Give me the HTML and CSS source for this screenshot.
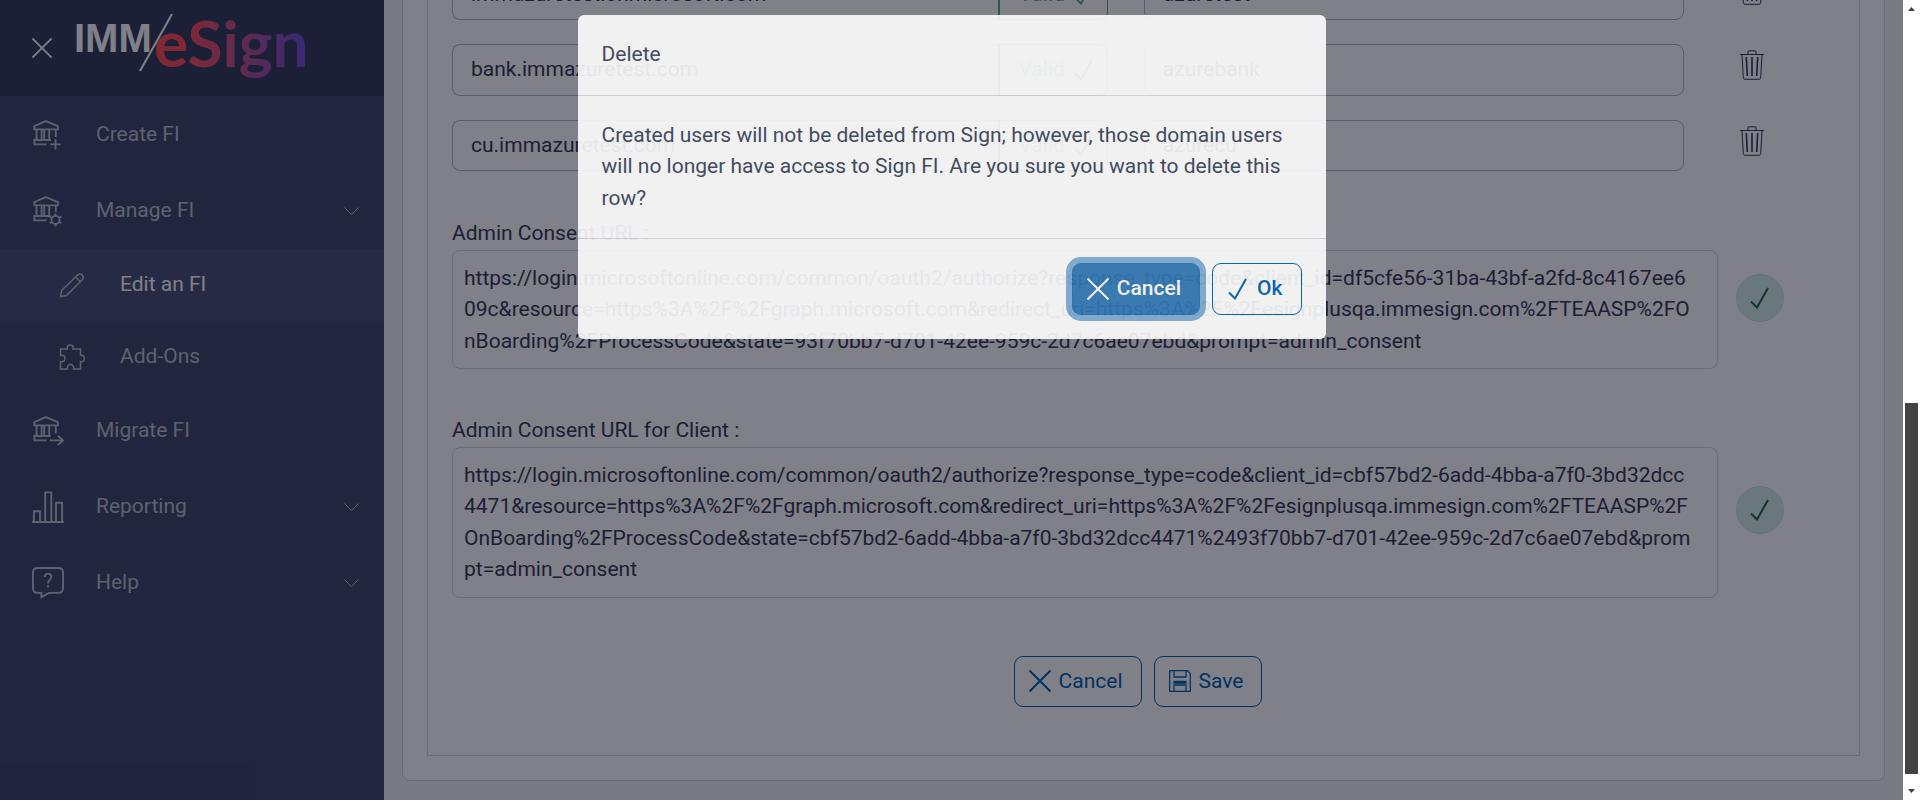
FILE: index.html
```html
<!DOCTYPE html>
<html lang="en">
<head>
    <meta charset="UTF-8">
    <meta name="viewport" content="width=device-width, initial-scale=1.0">
    <title>IMM eSign - Edit an FI</title>
    <link rel="stylesheet" href="styles.css">
</head>
<body>
    <!-- Shared icons -->
    <svg class="sprite" aria-hidden="true">
        <symbol id="icon-bank" viewBox="0 0 34 32">
            <path d="M2.5 10V6.5L14.7 1.2 27.500 6.500V10ZM4.800 10V21M10.200 10V21M13 10V21M18.300 10V21"/>
            <path d="M20 21.300H2.500V26H15.500"/>
        </symbol>
        <symbol id="icon-x" viewBox="0 0 22 22">
            <path d="M0.500 0.500 21.500 21.500M21.500 0.500 0.500 21.500"/>
        </symbol>
        <symbol id="icon-check" viewBox="0 0 22 22">
            <path d="M2 14.500 8 20.500 19 1"/>
        </symbol>
        <symbol id="icon-chevron" viewBox="0 0 15 9">
            <path d="M0.500 0.500 7.500 7.700 14.500 0.500"/>
        </symbol>
        <symbol id="icon-trash" viewBox="0 0 24 30">
            <path d="M0 4.500H24M8 4V1.500Q8 0.800 8.700 0.800H15.300Q16 0.800 16 1.500V4M2 5 3.300 27.500Q3.400 29.300 5 29.300H19Q20.600 29.300 20.700 27.500L22 5"/>
            <path d="M6.300 7 7.300 26M12 7V26M17.700 7 16.700 26" stroke-width="1.600"/>
        </symbol>
        <symbol id="icon-save" viewBox="0 0 22 22">
            <path stroke-width="1.300" d="M0.700 0.700H18.500L21.300 3.500V21.300H0.700ZM5 0.700V7H17V0.700M5 21V11.500H17V21M6 13H16M6 15H16"/>
        </symbol>
    </svg>

    <div class="app">
        <aside class="sidebar">
            <header class="sidebar-header">
                <button class="close-btn" type="button" aria-label="Close menu">
                    <svg width="20" height="20"><use href="#icon-x"/></svg>
                </button>
                <svg class="logo" width="236" height="96" viewBox="0 0 236 96" role="img" aria-label="IMM eSign">
                    <defs>
                        <linearGradient id="logo-gradient" gradientUnits="userSpaceOnUse" x1="80" y1="0" x2="232" y2="0">
                            <stop offset="0.200" stop-color="#ff5058"/>
                            <stop offset="0.600" stop-color="#b45496"/>
                            <stop offset="1" stop-color="#6c52da"/>
                        </linearGradient>
                    </defs>
                    <text class="logo-imm" x="-2" y="52">IMM</text>
                    <path d="M96 14 64 71" stroke="#fff" stroke-width="2"/>
                    <text class="logo-esign" x="78" y="67" fill="url(#logo-gradient)">eSign</text>
                </svg>
            </header>
            <nav>
                <ul class="menu">
                    <li>
                        <a class="menu-item" href="#create">
                            <svg class="menu-icon" viewBox="0 0 34 32">
                                <use href="#icon-bank"/>
                                <path d="M25.300 10V18M25 20.500V31.500M19.500 26H30.500"/>
                            </svg>
                            <span>Create FI</span>
                        </a>
                    </li>
                    <li>
                        <a class="menu-item" href="#manage">
                            <svg class="menu-icon" viewBox="0 0 34 32">
                                <use href="#icon-bank"/>
                                <path d="M25.300 10V17"/>
                                <circle cx="25" cy="25.500" r="4.300"/>
                                <path d="M25 21V18.500M25 30V32.500M29 23.300 31.200 22M29 27.700 31.200 29M21 23.300 18.800 22M21 27.700 18.800 29"/>
                            </svg>
                            <span>Manage FI</span>
                            <svg class="chevron" width="15" height="9"><use href="#icon-chevron"/></svg>
                        </a>
                        <ul>
                            <li>
                                <a class="menu-item sub-item active" href="#edit">
                                    <svg class="menu-icon" viewBox="0 0 24 24">
                                        <path d="M0.800 23.500 1.500 17.500 17.800 1.800Q20 0 22.300 2Q24.300 4.200 22.500 6.500L6.500 22.500ZM15.500 4 20.300 8.800"/>
                                    </svg>
                                    <span>Edit an FI</span>
                                </a>
                            </li>
                            <li>
                                <a class="menu-item sub-item" href="#addons">
                                    <svg class="menu-icon" viewBox="0 0 24 24">
                                        <path d="M0.500 4H7.500Q6.500 0 10.300 0Q14 0 13 4H20.500V10.500Q24.300 9.700 24.300 13.500Q24.300 17.300 20.500 16.500V24H13.500Q14 19.500 10.500 19.500Q7 19.500 7.500 24H0.500V16.500Q5 17.300 5 13.500Q5 9.700 0.500 10.500Z"/>
                                    </svg>
                                    <span>Add-Ons</span>
                                </a>
                            </li>
                        </ul>
                    </li>
                    <li>
                        <a class="menu-item" href="#migrate">
                            <svg class="menu-icon" viewBox="0 0 34 32">
                                <use href="#icon-bank"/>
                                <path d="M25.300 10V18.500M19 26H33M27.500 21 33 26 27.500 31"/>
                            </svg>
                            <span>Migrate FI</span>
                        </a>
                    </li>
                    <li>
                        <a class="menu-item" href="#reporting">
                            <svg class="menu-icon" viewBox="0 0 34 34">
                                <path d="M0 33H34M2 33V21.500H8.500V33M14 33V1.500H20.500V33M25.500 33V12.500H32V33"/>
                            </svg>
                            <span>Reporting</span>
                            <svg class="chevron" width="15" height="9"><use href="#icon-chevron"/></svg>
                        </a>
                    </li>
                    <li>
                        <a class="menu-item" href="#help">
                            <svg class="menu-icon" viewBox="0 0 34 34">
                                <path d="M6 1H28Q33 1 33 6V22Q33 27.500 28 27.500H18L10 32V27.500H6Q1 27.500 1 22V6Q1 1 6 1Z"/>
                                <path d="M13.500 11Q13.500 7 17 7Q20.500 7 20.500 10.500Q20.500 12.500 18.500 14Q17 15.300 17 17.500M17 19.500V21.500"/>
                            </svg>
                            <span>Help</span>
                            <svg class="chevron" width="15" height="9"><use href="#icon-chevron"/></svg>
                        </a>
                    </li>
                </ul>
            </nav>
        </aside>

        <main class="content">
            <section class="card">
                <form class="panel">
                    <div class="domain-row">
                        <div class="input-group">
                            <input class="field" type="text" aria-label="Domain" value="immazuretestionmicrosoft.com">
                            <span class="valid">Valid <svg width="22" height="22"><use href="#icon-check"/></svg></span>
                        </div>
                        <input class="field" type="text" aria-label="Alias" value="azuretest">
                        <button class="trash-btn" type="button" aria-label="Delete row"><svg width="24" height="30"><use href="#icon-trash"/></svg></button>
                    </div>
                    <div class="domain-row">
                        <div class="input-group">
                            <input class="field" type="text" aria-label="Domain" value="bank.immazuretest.com">
                            <span class="valid">Valid <svg width="22" height="22"><use href="#icon-check"/></svg></span>
                        </div>
                        <input class="field" type="text" aria-label="Alias" value="azurebank">
                        <button class="trash-btn" type="button" aria-label="Delete row"><svg width="24" height="30"><use href="#icon-trash"/></svg></button>
                    </div>
                    <div class="domain-row">
                        <div class="input-group">
                            <input class="field" type="text" aria-label="Domain" value="cu.immazuretest.com">
                            <span class="valid">Valid <svg width="22" height="22"><use href="#icon-check"/></svg></span>
                        </div>
                        <input class="field" type="text" aria-label="Alias" value="azurecu">
                        <button class="trash-btn" type="button" aria-label="Delete row"><svg width="24" height="30"><use href="#icon-trash"/></svg></button>
                    </div>

                    <div class="consent">
                        <div class="consent-field">
                            <label for="consent-url">Admin Consent URL :</label>
                            <textarea id="consent-url" class="url-box" rows="3" readonly>https://login.microsoftonline.com/common/oauth2/authorize?response_type=code&amp;client_id=df5cfe56-31ba-43bf-a2fd-8c4167ee609c&amp;resource=https%3A%2F%2Fgraph.microsoft.com&amp;redirect_uri=https%3A%2F%2Fesignplusqa.immesign.com%2FTEAASP%2FOnBoarding%2FProcessCode&amp;state=93f70bb7-d701-42ee-959c-2d7c6ae07ebd&amp;prompt=admin_consent</textarea>
                        </div>
                        <span class="status-badge"><svg width="22" height="22"><use href="#icon-check"/></svg></span>
                    </div>

                    <div class="consent">
                        <div class="consent-field">
                            <label for="consent-url-client">Admin Consent URL for Client :</label>
                            <textarea id="consent-url-client" class="url-box" rows="4" readonly>https://login.microsoftonline.com/common/oauth2/authorize?response_type=code&amp;client_id=cbf57bd2-6add-4bba-a7f0-3bd32dcc4471&amp;resource=https%3A%2F%2Fgraph.microsoft.com&amp;redirect_uri=https%3A%2F%2Fesignplusqa.immesign.com%2FTEAASP%2FOnBoarding%2FProcessCode&amp;state=cbf57bd2-6add-4bba-a7f0-3bd32dcc4471%2493f70bb7-d701-42ee-959c-2d7c6ae07ebd&amp;prompt=admin_consent</textarea>
                        </div>
                        <span class="status-badge"><svg width="22" height="22"><use href="#icon-check"/></svg></span>
                    </div>

                    <div class="form-actions">
                        <button class="btn" type="button"><svg width="22" height="22"><use href="#icon-x"/></svg>Cancel</button>
                        <button class="btn" type="button"><svg width="22" height="22"><use href="#icon-save"/></svg>Save</button>
                    </div>
                </form>
            </section>
        </main>

        <!-- Delete confirmation -->
        <div class="backdrop">
            <div class="modal" role="dialog" aria-modal="true" aria-labelledby="modal-title">
                <div class="modal-header" id="modal-title">Delete</div>
                <div class="modal-body">Created users will not be deleted from Sign; however, those domain users will no longer have access to Sign FI. Are you sure you want to delete this row?</div>
                <div class="modal-footer">
                    <button class="btn focused" type="button"><svg width="22" height="22"><use href="#icon-x"/></svg>Cancel</button>
                    <button class="btn" type="button"><svg width="22" height="22"><use href="#icon-check"/></svg>Ok</button>
                </div>
            </div>
        </div>
    </div>

    <div class="scrollbar" aria-hidden="true">
        <svg width="17" height="17"><path d="M5 11H12L8.500 7Z"/></svg>
        <div class="track"><div class="thumb"></div></div>
        <svg width="17" height="17"><path d="M5 6H12L8.500 10Z"/></svg>
    </div>
</body>
</html>
```
FILE: styles.css
```css
* {
    box-sizing: border-box;
}

body {
    display: flex;
    height: 100vh;
    margin: 0;
    overflow: hidden;
    font-family: Roboto, "Liberation Sans", sans-serif;
    font-size: 21px;
    line-height: 1.5;
    color: #363c5a;
}

input,
textarea,
button {
    font: inherit;
    color: inherit;
}

ul {
    margin: 0;
    padding: 0;
    list-style: none;
}

svg {
    flex: none;
    fill: none;
    stroke: currentColor;
    overflow: visible;
}

.sprite {
    position: absolute;
    width: 0;
    height: 0;
}

.app {
    position: relative;
    display: flex;
    flex: 1;
    min-width: 0;
    background: #f2f2f4;
}

/* Sidebar */
.sidebar {
    flex: none;
    width: 384px;
    background: #404a6a;
    color: #bcc0cb;
}

.sidebar-header {
    display: flex;
    align-items: center;
    gap: 24px;
    height: 96px;
    padding-left: 32px;
    background: #343e5c;
    color: #fff;
}

.close-btn {
    display: flex;
    padding: 0;
    border: none;
    background: none;
    stroke-width: 2;
    cursor: pointer;
}

.logo text {
    stroke: none;
    font-weight: 700;
}

.logo-imm {
    font-family: "Liberation Sans", sans-serif;
    font-size: 40px;
    fill: #fff;
}

.logo-esign {
    font-family: Lato, sans-serif;
    font-size: 64px;
}

.menu {
    padding-top: 1px;
}

.menu-item {
    display: flex;
    align-items: center;
    gap: 32px;
    height: 76px;
    padding: 0 25px 0 32px;
    color: inherit;
    text-decoration: none;
}

.menu-icon {
    width: 32px;
    height: 32px;
    stroke-width: 2;
}

.chevron {
    margin-left: auto;
}

.sub-item {
    gap: 36px;
    height: 72px;
    padding-left: 60px;
}

.sub-item .menu-icon {
    width: 24px;
    height: 24px;
    stroke-width: 1.5;
}

.active {
    background: #4a5376;
}

.active span {
    color: #fff;
}

/* Main content, scrolled to its end */
.content {
    display: flex;
    flex: 1;
    flex-direction: column;
    justify-content: flex-end;
    min-width: 0;
    padding: 18px 18px 19px;
    overflow: hidden;
}

.card {
    flex: none;
    padding: 24px;
    border: 1px solid #d6d6e0;
    border-radius: 8px;
    background: #fff;
}

.panel {
    padding: 24px 75px 48px 24px;
    border: 1px solid #d0d1dc;
}

.domain-row {
    display: grid;
    grid-template-columns: 17fr 14fr 64px;
    align-items: start;
    gap: 36px;
    margin-bottom: 24px;
}

.input-group {
    display: flex;
}

.field {
    width: 100%;
    min-width: 0;
    padding: 9px 18px;
    border: 1px solid #b4b5ca;
    border-radius: 8px;
    background: #fff;
    line-height: inherit;
}

.input-group .field {
    flex: 1;
    border-right: none;
    border-radius: 8px 0 0 8px;
}

.valid {
    display: flex;
    align-items: center;
    gap: 8px;
    padding: 0 12px 0 18px;
    border: 1px solid #4fb384;
    border-left-width: 2px;
    border-radius: 0 8px 8px 0;
    color: #4fb384;
    stroke-width: 2;
}

.trash-btn {
    display: flex;
    justify-content: center;
    padding: 6px 0 0;
    border: none;
    background: none;
    cursor: pointer;
}

.consent {
    display: grid;
    grid-template-columns: 1fr 48px;
    align-items: center;
    gap: 18px;
    margin-top: 38px;
}

.consent-field {
    display: flex;
    flex-direction: column;
    padding-bottom: 8px;
}

.domain-row + .consent {
    margin-top: 47px;
}

.url-box {
    display: block;
    width: 100%;
    padding: 12px 24px 11px 11px;
    border: 1px solid #d4d4e0;
    border-radius: 8px;
    background: #fff;
    line-height: inherit;
    word-break: break-all;
    resize: none;
    overflow: hidden;
}

.status-badge {
    display: flex;
    align-items: center;
    justify-content: center;
    height: 48px;
    border: 1px solid #c4e6d8;
    border-radius: 50%;
    background: #d3eee4;
    color: #1f6a4a;
    stroke-width: 2;
}

.form-actions {
    display: flex;
    justify-content: center;
    gap: 12px;
    margin-top: 50px;
    padding-left: 40px;
}

.btn {
    display: flex;
    align-items: center;
    gap: 8px;
    padding: 9px 18px 9px 14px;
    border: 1px solid #0065b1;
    border-radius: 9px;
    background: none;
    color: #0065b1;
    stroke-width: 2;
    cursor: pointer;
}

/* Modal */
.backdrop {
    position: absolute;
    inset: 0;
    display: flex;
    align-items: flex-start;
    justify-content: center;
    padding: 15px;
    background: rgba(1, 1, 18, 0.5);
}

.modal {
    width: 748px;
    border-radius: 6px;
    background: #fff;
    color: #3b465b;
    opacity: 0.89;
}

.modal-header,
.modal-body {
    padding: 24px;
    border-bottom: 1px solid #d8dbe2;
}

.modal-footer {
    display: flex;
    justify-content: flex-end;
    gap: 12px;
    padding: 24px;
}

.modal .btn {
    font-weight: 500;
}

.btn.focused {
    border-color: #2a72b2;
    background: #327ab7;
    color: #fff;
    box-shadow: 0 0 0 6px #80afd9;
}

/* Scrollbar */
.scrollbar {
    display: flex;
    flex: none;
    flex-direction: column;
    width: 17px;
    background: #fff;
}

.scrollbar svg {
    fill: #424242;
    stroke: none;
}

.track {
    display: flex;
    flex: 1;
    flex-direction: column;
    justify-content: flex-end;
    padding: 0 2px 9px;
}

.thumb {
    height: 49%;
    background: #424242;
}
```
